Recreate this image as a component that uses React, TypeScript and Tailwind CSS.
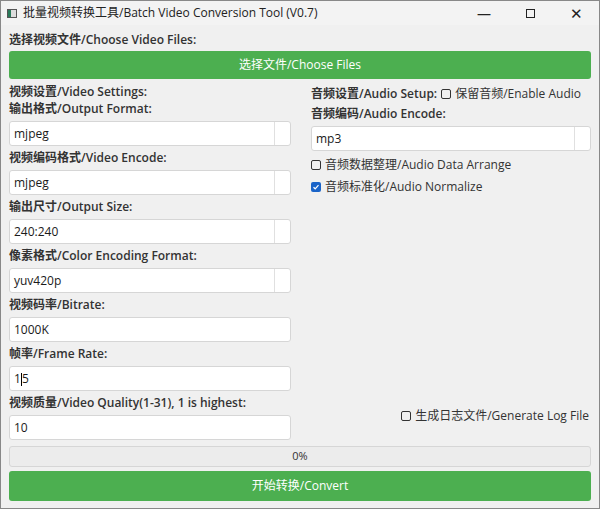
import React from "react";

const F = { fontFamily: '"Open Sans","Noto Sans CJK SC",sans-serif' };

function Combo({ v }: { v: string }) {
  return (
    <div className="h-[25px] bg-white border border-[#d6d6d6] rounded-[3px] flex items-center">
      <div className="flex-1 pl-[4px] text-[12px] text-[#1a1a1a]">{v}</div>
      <div className="w-[16px] h-full border-l border-[#e0e0e0]" />
    </div>
  );
}
function Input({ v }: { v: React.ReactNode }) {
  return (
    <div className="h-[25px] bg-white border border-[#d6d6d6] rounded-[3px] flex items-center pl-[4px] text-[12px] text-[#1a1a1a]">{v}</div>
  );
}
function Label({ t }: { t: string }) {
  return <div className="h-[24px] flex items-center text-[12px] font-semibold text-[#333]">{t}</div>;
}
function Box({ checked }: { checked?: boolean }) {
  return checked ? (
    <span className="inline-flex w-[10px] h-[10px] rounded-[2px] bg-[#1a64c8] items-center justify-center mr-[4px]">
      <svg width="8" height="8" viewBox="0 0 8 8"><path d="M1.5 4.2l1.7 1.6 3.3-3.6" stroke="white" strokeWidth="1.2" fill="none" /></svg>
    </span>
  ) : (
    <span className="inline-block w-[10px] h-[10px] rounded-[2px] border border-[#333] mr-[4px]" />
  );
}

export default function App() {
  return (
    <div style={F} className="w-[600px] h-[509px] bg-[#f0f0f0] border border-[#888] flex flex-col overflow-hidden">
      <div className="h-[24px] bg-[#f3f3f3] flex items-center text-[12px] text-[#222]">
        <div className="w-[10px] h-[9px] ml-[6px] mr-[6px] border border-[#555] bg-[linear-gradient(90deg,#2a7a5a_40%,#ddd_40%)]" />
        <span className="flex-1">批量视频转换工具/Batch Video Conversion Tool (V0.7)</span>
        <span className="w-[46px] text-center text-[14px]">—</span>
        <span className="w-[46px] flex justify-center"><span className="w-[9px] h-[9px] border border-[#222]" /></span>
        <span className="w-[46px] text-center text-[15px]">✕</span>
      </div>
      <div className="flex-1 px-[8px] flex flex-col">
        <div className="h-[25px] flex items-end pb-[1px]"><span className="text-[12px] font-semibold text-[#333]">选择视频文件/Choose Video Files:</span></div>
        <div className="h-[28px] mt-[1px] bg-[#4caf50] rounded-[3px] flex items-center justify-center text-white text-[12px]">选择文件/Choose Files</div>
        <div className="flex mt-[1px]">
          <div className="w-[282px] flex flex-col">
            <Label t="视频设置/Video Settings:" />
            <div className="h-[19px] -mt-[5px] flex items-center text-[12px] font-semibold text-[#333]">输出格式/Output Format:</div>
            <div className="mt-[3px]"><Combo v="mjpeg" /></div>
            <Label t="视频编码格式/Video Encode:" />
            <Combo v="mjpeg" />
            <Label t="输出尺寸/Output Size:" />
            <Combo v="240:240" />
            <Label t="像素格式/Color Encoding Format:" />
            <Combo v="yuv420p" />
            <Label t="视频码率/Bitrate:" />
            <Input v="1000K" />
            <Label t="帧率/Frame Rate:" />
            <Input v={<span>1<span className="inline-block w-px h-[13px] bg-black align-middle" />5</span>} />
            <Label t="视频质量/Video Quality(1-31), 1 is highest:" />
            <Input v="10" />
          </div>
          <div className="flex-1 ml-[20px] flex flex-col">
            <div className="h-[24px] mt-[2px] flex items-center text-[12px] text-[#333]">
              <span className="font-semibold mr-[4px]">音频设置/Audio Setup:</span><Box />保留音频/Enable Audio
            </div>
            <div className="h-[19px] -mt-[2px] flex items-center text-[12px] font-semibold text-[#333]">音频编码/Audio Encode:</div>
            <div className="mt-[3px]"><Combo v="mp3" /></div>
            <div className="h-[24px] mt-[2px] flex items-center text-[12px] text-[#333]"><Box />音频数据整理/Audio Data Arrange</div>
            <div className="h-[20px] flex items-center text-[12px] text-[#333]"><Box checked />音频标准化/Audio Normalize</div>
            <div className="flex-1" />
            <div className="h-[20px] mb-[14px] flex items-center justify-end pr-[2px] text-[12px] text-[#333]"><Box />生成日志文件/Generate Log File</div>
          </div>
        </div>
        <div className="h-[21px] mt-[6px] border border-[#d6d6d6] rounded-[3px] bg-[#ececec] flex items-center justify-center text-[11px] text-[#333]">0%</div>
        <div className="h-[30px] mt-[4px] bg-[#4caf50] rounded-[3px] flex items-center justify-center text-white text-[12px]">开始转换/Convert</div>
      </div>
    </div>
  );
}
